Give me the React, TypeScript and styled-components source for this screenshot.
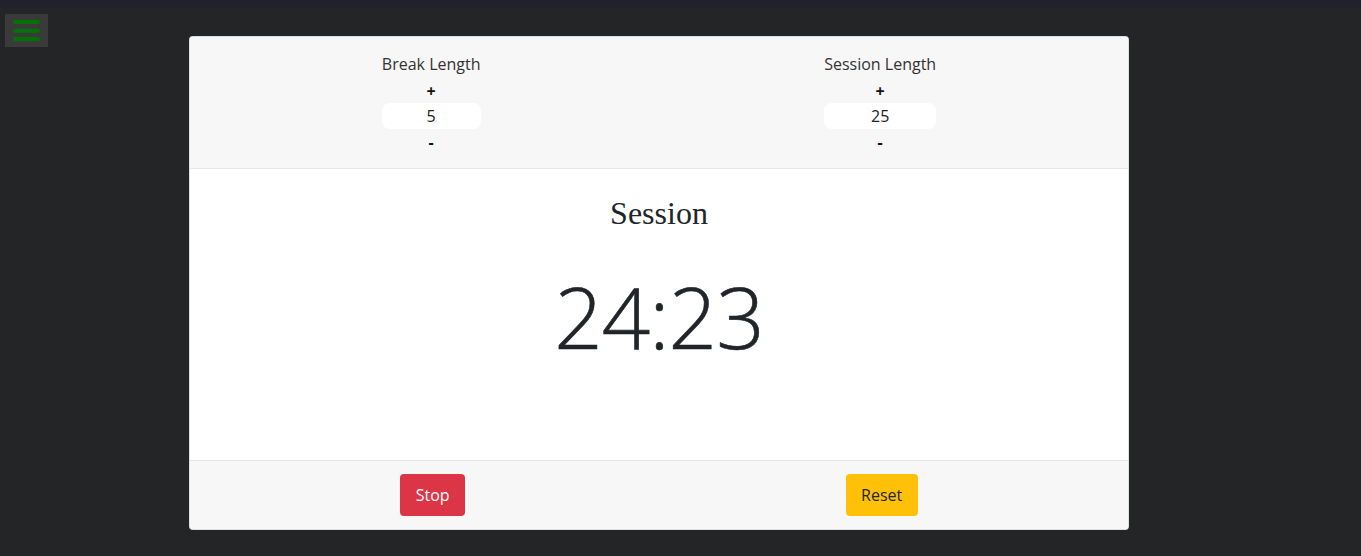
import React from "react";
import styled, { createGlobalStyle } from "styled-components";

const Global = createGlobalStyle`
  html, body { margin: 0; padding: 0; }
  body {
    background: #242527;
    font-family: "Open Sans", "Noto Sans", sans-serif;
    color: #212529;
    height: 556px;
    overflow: hidden;
  }
`;

const TopStrip = styled.div`
  height: 8px;
  background: linear-gradient(#1e1f2d, #222329);
`;

const Menu = styled.button`
  position: absolute;
  top: 14px;
  left: 5px;
  width: 43px;
  height: 33px;
  border: none;
  padding: 6px 8px 0 8px;
  background: #393a39;
  display: flex;
  flex-direction: column;
  gap: 4.5px;
  cursor: pointer;
`;

const MenuLine = styled.span`
  display: block;
  width: 27px;
  height: 4px;
  border-radius: 2px;
  background: #007400;
`;

const Main = styled.main`
  padding: 28px 0 0 189px;
`;

const Card = styled.div`
  width: 940px;
  border-radius: 4px;
  overflow: hidden;
  background: #fff;
  border: 1px solid rgba(0, 0, 0, 0.125);
  box-sizing: border-box;
`;

const Header = styled.div`
  background: #f7f7f7;
  border-bottom: 1px solid #e6e6e6;
  padding: 12px 20px 14px;
  display: flex;
  justify-content: space-around;
`;

const Control = styled.div`
  display: flex;
  flex-direction: column;
  align-items: stretch;
  text-align: center;
`;

const Label = styled.div`
  font-size: 16px;
  line-height: 24px;
  margin: 3px 0 3px;
  color: #333;
  white-space: nowrap;
`;

const Step = styled.button`
  border: none;
  background: none;
  padding: 0;
  font-family: inherit;
  font-weight: 700;
  font-size: 16px;
  line-height: 24px;
  color: #111;
  cursor: pointer;
`;

const Value = styled.input`
  border: none;
  outline: none;
  background: #fff;
  border-radius: 8px;
  height: 26px;
  margin: 0 0 1px;
  padding: 0;
  width: 0;
  min-width: 100%;
  box-sizing: border-box;
  text-align: center;
  font-family: inherit;
  font-size: 16px;
  color: #222;
`;

const Body = styled.div`
  height: 291px;
  box-sizing: border-box;
  padding: 25px 20px 20px;
  display: flex;
  flex-direction: column;
  align-items: center;
`;

const Mode = styled.h2`
  margin: 0;
  font-family: "Liberation Serif", "Times New Roman", serif;
  font-weight: 400;
  font-size: 32px;
  line-height: 38px;
  color: #212529;
`;

const Time = styled.div`
  margin-top: 33px;
  font-size: 85px;
  font-weight: 300;
  line-height: 102px;
  color: #212529;
  letter-spacing: -1px;
  -webkit-text-stroke: 0.6px #212529;
`;

const Footer = styled.div`
  background: #f7f7f7;
  border-top: 1px solid #e3e3e3;
  padding: 13px 20px 13px;
  display: flex;
  justify-content: space-around;
`;

const Btn = styled.button<{ $tone: "danger" | "warning" }>`
  border: none;
  border-radius: 4px;
  padding: 9px 15.5px;
  font-family: inherit;
  font-size: 16px;
  line-height: 24px;
  cursor: pointer;
  background: ${(p) => (p.$tone === "danger" ? "#dc3545" : "#ffc107")};
  color: ${(p) => (p.$tone === "danger" ? "#fff" : "#212529")};
`;

function LengthControl({ label, value }: { label: string; value: number }) {
  return (
    <Control>
      <Label>{label}</Label>
      <Step>+</Step>
      <Value readOnly value={value} />
      <Step>-</Step>
    </Control>
  );
}

export default function App() {
  return (
    <>
      <Global />
      <TopStrip />
      <Menu aria-label="menu">
        <MenuLine />
        <MenuLine />
        <MenuLine />
      </Menu>
      <Main>
        <Card>
          <Header>
            <LengthControl label="Break Length" value={5} />
            <LengthControl label="Session Length" value={25} />
          </Header>
          <Body>
            <Mode>Session</Mode>
            <Time>24:23</Time>
          </Body>
          <Footer>
            <Btn $tone="danger">Stop</Btn>
            <Btn $tone="warning">Reset</Btn>
          </Footer>
        </Card>
      </Main>
    </>
  );
}
